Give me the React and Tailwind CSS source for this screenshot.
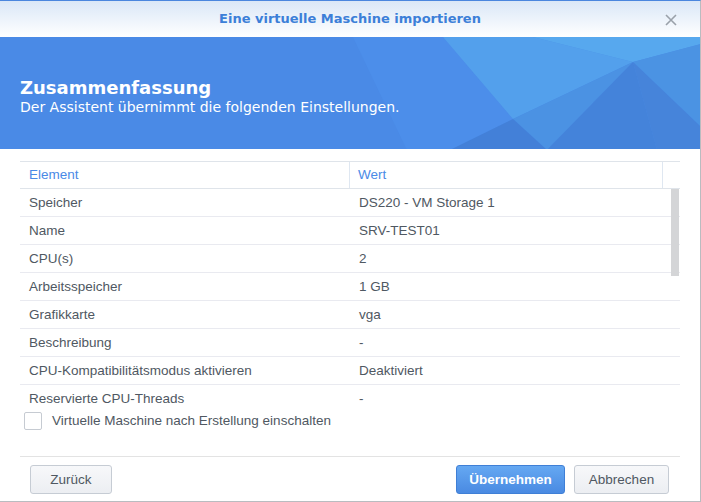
import React from 'react';

const rows = [
  ['Speicher', 'DS220 - VM Storage 1'],
  ['Name', 'SRV-TEST01'],
  ['CPU(s)', '2'],
  ['Arbeitsspeicher', '1 GB'],
  ['Grafikkarte', 'vga'],
  ['Beschreibung', '-'],
  ['CPU-Kompatibilitätsmodus aktivieren', 'Deaktiviert'],
  ['Reservierte CPU-Threads', '-'],
];

function BannerFacets() {
  return (
    <svg className="absolute inset-0" width="701" height="112" viewBox="0 36 701 112" preserveAspectRatio="none">
      <polygon points="353,36 443,36 513,118 450,149 407,149" fill="#4c8eea" />
      <polygon points="443,36 533,36 633,61 513,118" fill="#53a0ec" />
      <polygon points="533,36 701,36 701,43 633,61" fill="#57a8ee" />
      <polygon points="513,118 633,61 547,149" fill="#4b92e3" />
      <polygon points="450,149 513,118 547,149" fill="#4380d8" />
      <polygon points="547,149 633,61 657,149" fill="#4483da" />
      <polygon points="633,61 701,43 701,126" fill="#4b93e3" />
      <polygon points="633,61 701,126 701,149 657,149" fill="#4684da" />
    </svg>
  );
}

export default function App() {
  return (
    <div className="w-[701px] h-[502px] bg-white overflow-hidden flex flex-col border-t border-t-[#4a86de] border-r border-r-[#b9bcc0] border-b border-b-[#b9bcc0] font-['Liberation_Sans',Arial,sans-serif]">
      {/* Title bar */}
      <div className="h-[36px] shrink-0 relative flex items-center justify-center bg-gradient-to-b from-[#dae7f7] to-white">
        <span className="text-[13px] font-bold text-[#3c7fd8] font-['DejaVu_Sans',sans-serif]">Eine virtuelle Maschine importieren</span>
        <svg className="absolute right-[23px] top-[13px]" width="12" height="12" viewBox="0 0 12 12">
          <path d="M1 1 L11 11 M11 1 L1 11" stroke="#9aa1aa" strokeWidth="1.6" />
        </svg>
      </div>

      {/* Banner */}
      <div className="h-[112px] shrink-0 relative bg-[#4a8ae6] overflow-hidden">
        <BannerFacets />
        <div className="relative pl-[20px] pt-[39px] text-white font-['DejaVu_Sans',sans-serif]">
          <div className="text-[18px] font-bold leading-[23px]">Zusammenfassung</div>
          <div className="text-[14px] leading-[17px]">Der Assistent übernimmt die folgenden Einstellungen.</div>
        </div>
      </div>

      {/* Table */}
      <div className="mx-[20px] mt-[12px] text-[13.5px] text-[#4f5862]">
        <div className="flex h-[28px] border-t border-b border-[#dfe4ea] text-[#4a8ae6]">
          <div className="w-[330px] pl-[9px] flex items-center border-r border-[#dfe7f1]">Element</div>
          <div className="w-[313px] pl-[8px] flex items-center border-r border-[#dfe7f1]">Wert</div>
        </div>
        <div className="relative h-[216px] overflow-hidden">
          {rows.map(([k, v]) => (
            <div key={k} className="flex h-[28px] pt-[2px] border-b border-[#e9eaf0]">
              <div className="w-[330px] pl-[9px] flex items-center">{k}</div>
              <div className="flex-1 pl-[9px] flex items-center">{v}</div>
            </div>
          ))}
          <div className="absolute right-[1px] top-0 w-[8px] h-[87px] bg-[#d4d5d7]" />
        </div>
      </div>

      {/* Checkbox */}
      <div className="flex items-center ml-[24px] mt-[7px] h-[18px] text-[13.5px] text-[#4f5862]">
        <div className="w-[18px] h-[18px] border border-[#c6cbd2] rounded-[2px] bg-white" />
        <span className="ml-[10px]">Virtuelle Maschine nach Erstellung einschalten</span>
      </div>

      {/* Footer */}
      <div className="mx-[20px] mt-[26px] border-t border-[#e3e3e3]" />
      <div className="flex items-center px-[30px] mt-[8px] text-[13.5px]">
        <button className="w-[82px] h-[29px] pt-[1px] rounded-[3px] border border-[#c6ccd4] bg-gradient-to-b from-[#f7f8fa] to-[#eceef2] text-[#4f5862]">Zurück</button>
        <div className="flex-1" />
        <button className="w-[109px] h-[29px] pt-[1px] rounded-[3px] border border-[#3f7fd6] bg-gradient-to-b from-[#65a8f2] to-[#4a8ae2] text-white font-bold">Übernehmen</button>
        <button className="ml-[9px] mr-[1px] w-[95px] h-[29px] pt-[1px] rounded-[3px] border border-[#c6ccd4] bg-gradient-to-b from-[#f7f8fa] to-[#eceef2] text-[#4f5862]">Abbrechen</button>
      </div>
    </div>
  );
}
